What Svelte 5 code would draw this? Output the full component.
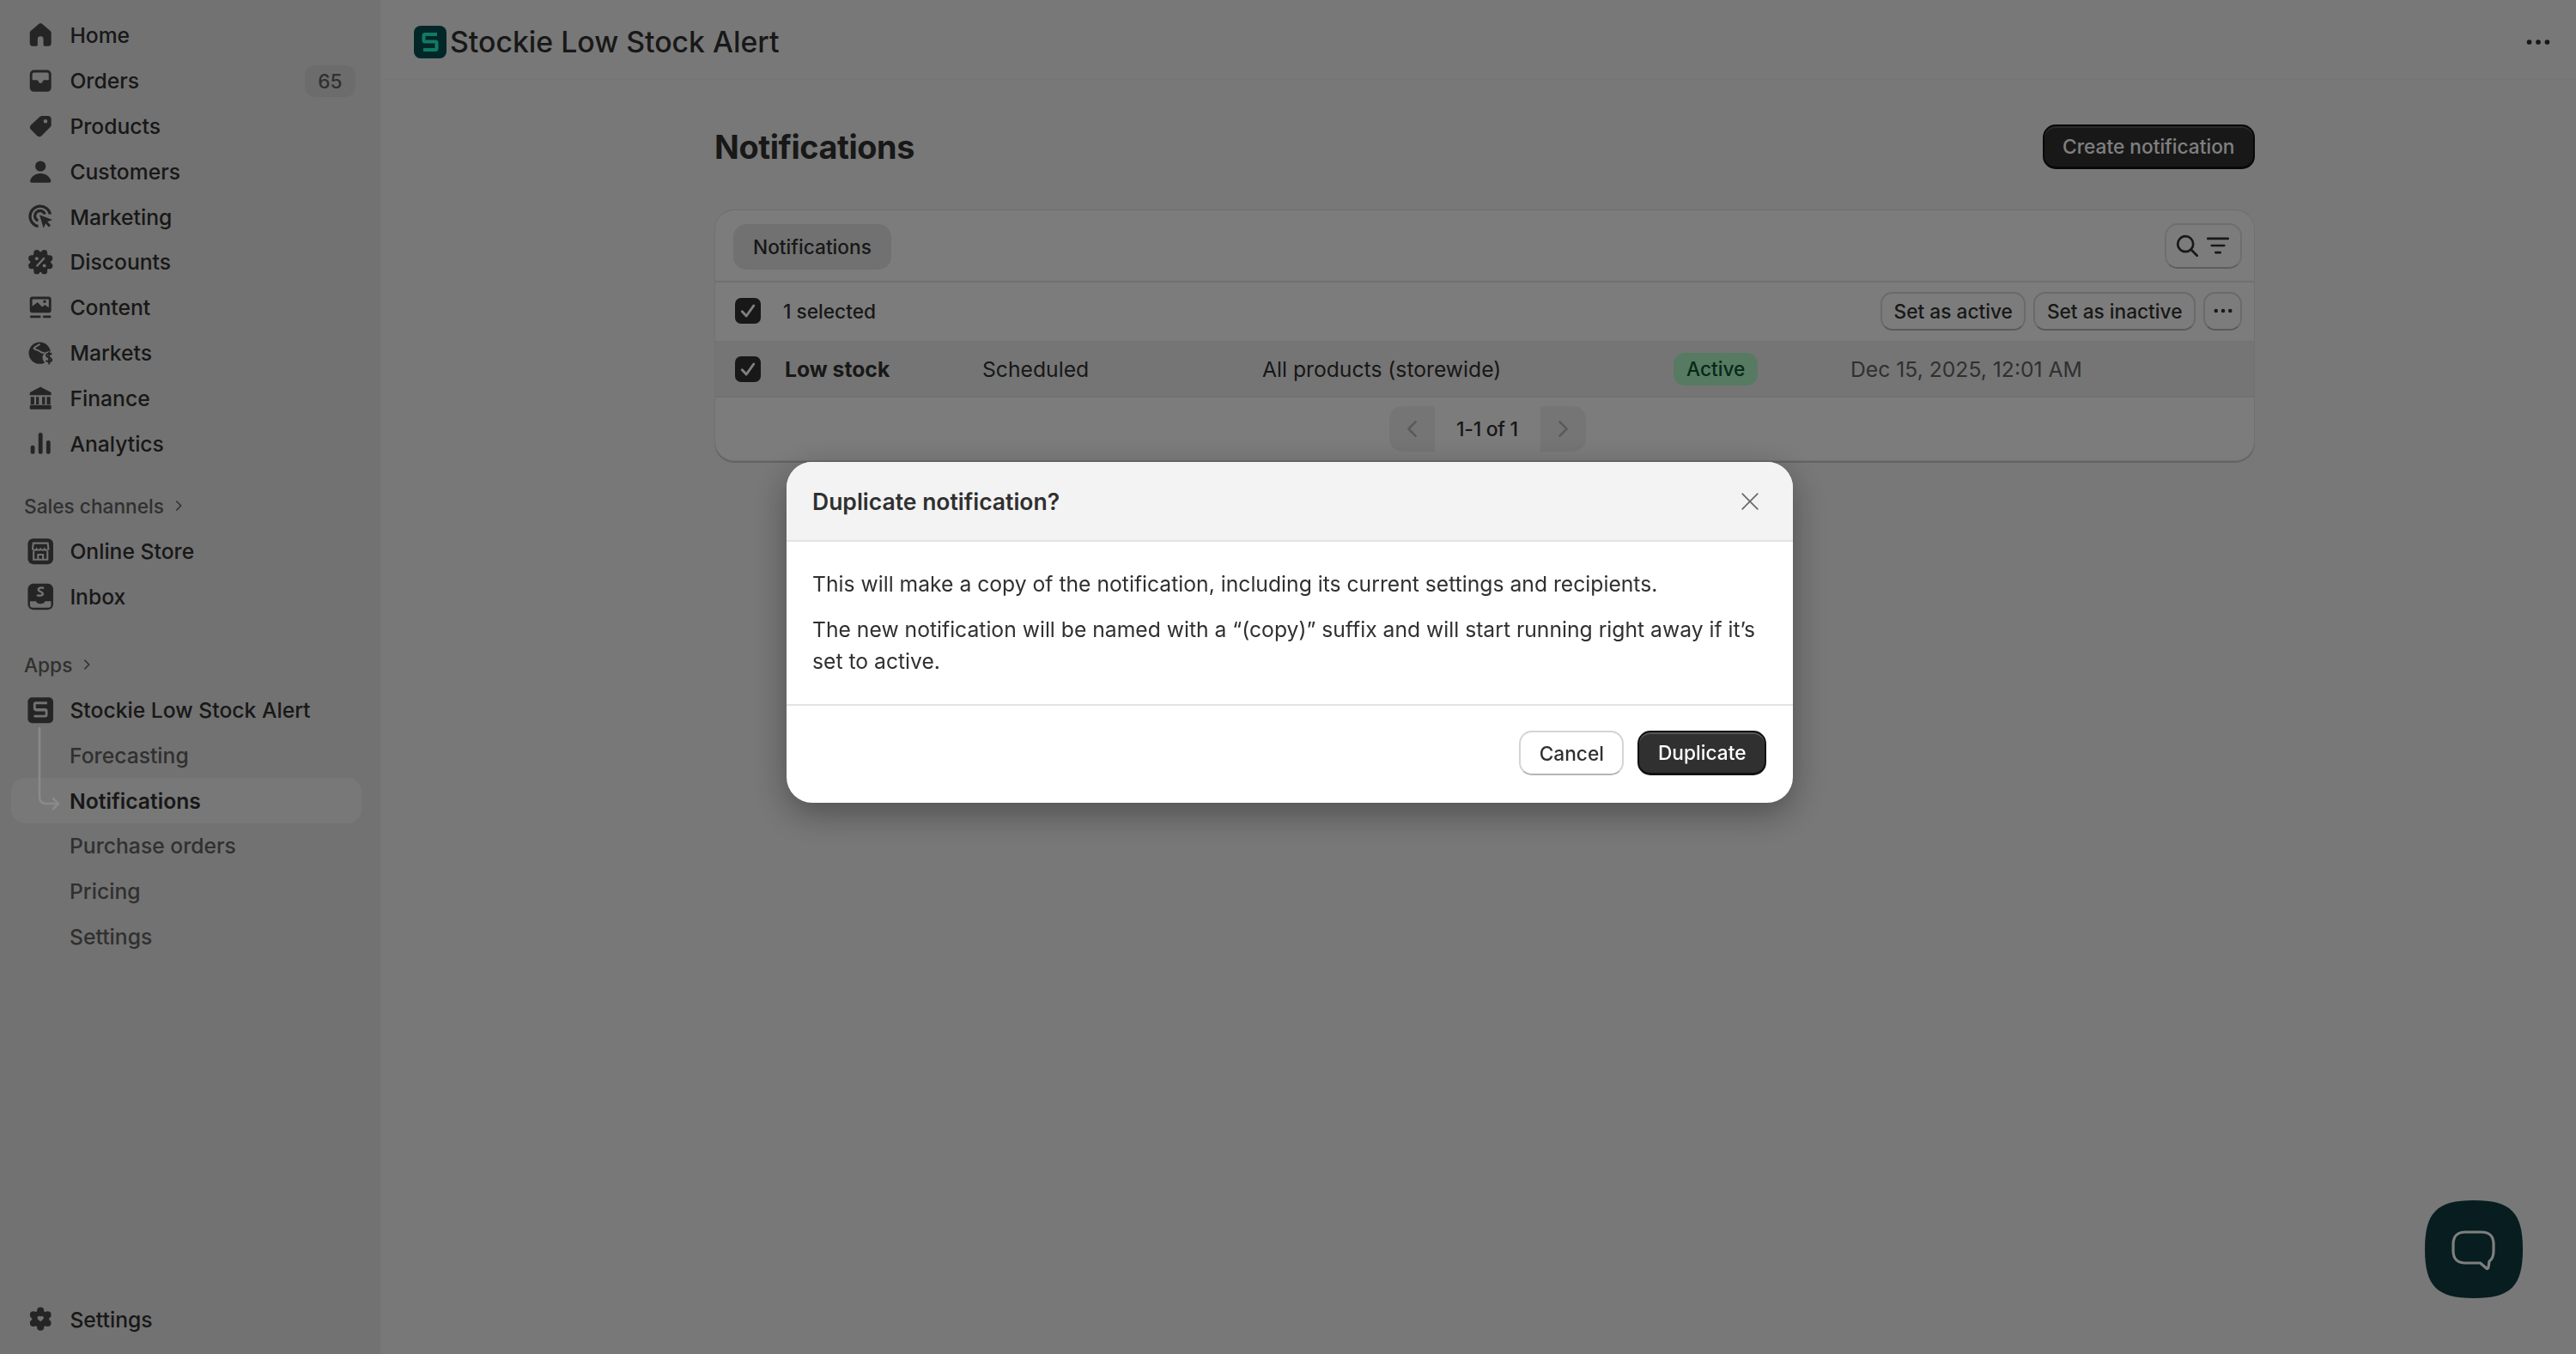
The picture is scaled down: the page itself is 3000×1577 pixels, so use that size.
<script>
  const bg = '#e4e4e4';

  const bumps = (r, n, br, start = 0) =>
    Array.from({ length: n }, (_, i) => {
      const a = start + (i * 2 * Math.PI) / n;
      return `<circle cx="${(10 + r * Math.cos(a)).toFixed(2)}" cy="${(10 + r * Math.sin(a)).toFixed(2)}" r="${br}"/>`;
    }).join('');

  const icons = {
    home: `<path d="M9.2 2.9a1.25 1.25 0 0 1 1.6 0l5 4.2c.45.38.7.93.7 1.52v6.13a1.75 1.75 0 0 1-1.75 1.75h-2.25a.75.75 0 0 1-.75-.75v-3.5a1.75 1.75 0 0 0-3.5 0v3.5a.75.75 0 0 1-.75.75h-2.25a1.75 1.75 0 0 1-1.75-1.75v-6.13c0-.59.25-1.14.7-1.52z"/>`,
    orders: `<path fill-rule="evenodd" d="M6 3.4h8a2.5 2.5 0 0 1 2.5 2.5v8.2a2.5 2.5 0 0 1-2.5 2.5h-8a2.5 2.5 0 0 1-2.5-2.5v-8.2a2.5 2.5 0 0 1 2.5-2.5zM6 5a1 1 0 0 0-1 1v3.5h2.6c.5 0 .9.3 1.1.8l.2.5c.1.3.4.5.7.5h.8c.3 0 .6-.2.7-.5l.2-.5c.2-.5.6-.8 1.1-.8H15V6a1 1 0 0 0-1-1z"/>`,
    products: `<path fill-rule="evenodd" d="M11 3.6h3.6c1 0 1.9.9 1.9 1.9v3.6c0 .5-.2 1-.6 1.3l-5.3 5.3c-.7.7-1.9.7-2.6 0l-3.9-3.9c-.7-.7-.7-1.9 0-2.6l5.6-5.1c.3-.3.8-.5 1.3-.5zM13 5.7a1.2 1.2 0 1 0 0 2.4 1.2 1.2 0 0 0 0-2.4z"/>`,
    customers: `<circle cx="10" cy="6.6" r="3.2"/><path d="M10 10.9c-3.4 0-5.6 2-6.3 4.4-.2.7.3 1.2 1 1.2h10.6c.7 0 1.2-.5 1-1.2-.7-2.4-2.9-4.4-6.3-4.4z"/>`,
    marketing: `<g fill="none" stroke="currentColor"><path stroke-width="1.7" d="M15.9 8.6A6.2 6.2 0 1 0 8.6 16"/><path stroke-width="1.7" d="M12.6 8.6a3.1 3.1 0 1 0-4.1 3.9"/></g><path d="M9.4 9l7.8 3-3 1.1 2 2.3-1.2 1-1.9-2.2-1.3 2.8z"/>`,
    discounts:
      `<circle cx="10" cy="10" r="6.2"/>` +
      bumps(5.9, 8, 1.9, Math.PI / 8) +
      `<path d="M7.6 12.6l4.8-5.2" stroke="${bg}" stroke-width="1.2"/><circle cx="7.7" cy="7.9" r="1" fill="${bg}"/><circle cx="12.3" cy="12.2" r="1" fill="${bg}"/>`,
    content: `<rect x="3.5" y="3.4" width="13" height="9.8" rx="1.6"/><path d="M5 5h10v5l-2.4-1.6-1.6 1.2-2.8-2.8L5 9.2z" fill="${bg}"/><circle cx="12.5" cy="6.4" r=".9"/><rect x="3.6" y="14.9" width="6.6" height="1.4" rx=".7"/><rect x="11.4" y="14.9" width="5" height="1.4" rx=".7"/>`,
    markets: `<circle cx="9.5" cy="10" r="6.6"/><path d="M9.6 4.6c-1.2 1-2.8 1.3-3.6 2.6.9 1 2.4.8 3.4 1.6 1 .8 2 1.3 3 .9" fill="none" stroke="${bg}" stroke-width="1"/><circle cx="15" cy="12.8" r="3.8" fill="${bg}"/><path d="M16.8 10.8c-.5-.5-2.9-.9-3.2.5-.3 1.7 3.3 1.1 3.1 2.9-.2 1.3-2.8 1-3.4.3M15.2 9.4v7.4" fill="none" stroke="currentColor" stroke-width="1.1"/>`,
    finance: `<path d="M9.3 3.2c.4-.2 1-.2 1.4 0l5.4 2.9c.3.2.4.4.4.7v1.2H3.5V6.8c0-.3.1-.5.4-.7z"/><path d="M4 9h2.2v4.5H4zM7.3 9H9v4.5H7.3zM11 9h1.7v4.5H11zM13.8 9H16v4.5h-2.2z"/><rect x="3.5" y="14" width="13" height="2.6" rx=".6"/>`,
    analytics: `<rect x="4" y="11.3" width="2.5" height="5.3" rx="1.1"/><rect x="8.75" y="3.6" width="2.5" height="13" rx="1.1"/><rect x="13.5" y="8.4" width="2.5" height="8.2" rx="1.1"/>`,
    store: `<rect x="2.3" y="2.2" width="15.4" height="15.6" rx="3.2"/><g fill="none" stroke="${bg}" stroke-width="1.1"><path d="M5.2 8.6c1 .9 2 .9 2.4 0 .6.9 1.8.9 2.4 0 .6.9 1.8.9 2.4 0 .4.9 1.4.9 2.4 0L14.4 5H5.6z"/><path d="M5.8 9.8V15h8.4V9.8M8.5 15v-3h3v3"/></g>`,
    inbox: `<rect x="2.3" y="2" width="15.4" height="15.8" rx="3.2"/><path d="M3.6 12.6h3.6c.4 1 1.4 1.6 2.8 1.6s2.4-.6 2.8-1.6h3.6V15c0 1-.6 1.6-1.6 1.6H5.2c-1 0-1.6-.6-1.6-1.6z" fill="${bg}"/><path d="M12 4.7c-1.3-.6-3.4-.3-3.3 1 .1 1.2 2.7 1.1 2.7 2.4 0 1.2-2.2 1.4-3.6.8" fill="none" stroke="${bg}" stroke-width="1.3"/>`,
    stockie: `<rect x="2.3" y="2.2" width="15.4" height="15.6" rx="2.6"/><path d="M14 5.6H7.2a.8.8 0 0 0-.8.8v2.400c0 .4.4.8.8.8h5.600c.4 0 .8.4.8.8v2.400c0 .4-.4.8-.8.8H6M7 9.900h6" fill="none" stroke="${bg}" stroke-width="1.5"/>`,
    gear: `<circle cx="10" cy="10" r="5.2"/>` + bumps(5, 6, 2.1, -Math.PI / 2) + `<path d="M10 8.5c.9-.7 2-.1 1.900.9-.1.9-1.100 1.500-1.900 2.100-.8-.6-1.800-1.200-1.900-2.100-.1-1 1-1.600 1.900-.9z" fill="${bg}"/>`
  };

  const mainNav = [
    { label: 'Home', icon: 'home' },
    { label: 'Orders', icon: 'orders', badge: 65 },
    { label: 'Products', icon: 'products' },
    { label: 'Customers', icon: 'customers' },
    { label: 'Marketing', icon: 'marketing' },
    { label: 'Discounts', icon: 'discounts' },
    { label: 'Content', icon: 'content' },
    { label: 'Markets', icon: 'markets' },
    { label: 'Finance', icon: 'finance' },
    { label: 'Analytics', icon: 'analytics' }
  ];
  const channels = [
    { label: 'Online Store', icon: 'store' },
    { label: 'Inbox', icon: 'inbox' }
  ];
  const appLinks = ['Forecasting', 'Notifications', 'Purchase orders', 'Pricing', 'Settings'];
</script>

{#snippet navRow(item)}
  <a class="nav-row" href="#top">
    <svg class="nav-icon" viewBox="0 0 20 20" fill="currentColor">{@html icons[item.icon]}</svg>
    <span class="nav-label">{item.label}</span>
    {#if item.badge}<span class="nav-badge">{item.badge}</span>{/if}
  </a>
{/snippet}

{#snippet chevron()}
  <svg class="chev" viewBox="0 0 20 20" fill="none" stroke="currentColor" stroke-width="1.8" stroke-linecap="round" stroke-linejoin="round"><path d="M7.5 4.500 13 10l-5.500 5.500"/></svg>
{/snippet}

{#snippet checkbox()}
  <span class="check">
    <svg viewBox="0 0 20 20" fill="none" stroke="#fff" stroke-width="2" stroke-linecap="round" stroke-linejoin="round"><path d="M5.500 10.500 8.800 14l5.700-8"/></svg>
  </span>
{/snippet}

{#snippet dots()}
  <svg class="dots" viewBox="0 0 20 20" fill="currentColor"><circle cx="4.500" cy="10" r="1.500"/><circle cx="10" cy="10" r="1.500"/><circle cx="15.500" cy="10" r="1.500"/></svg>
{/snippet}

<div class="admin">
  <aside class="sidebar">
    <nav class="nav-group first">
      {#each mainNav as item}{@render navRow(item)}{/each}
    </nav>

    <div class="section-title">Sales channels {@render chevron()}</div>
    <nav class="nav-group">
      {#each channels as item}{@render navRow(item)}{/each}
    </nav>

    <div class="section-title apps">Apps {@render chevron()}</div>
    <nav class="nav-group app-group">
      {@render navRow({ label: 'Stockie Low Stock Alert', icon: 'stockie' })}
      <svg class="connector" viewBox="0 0 26 100" fill="none" stroke="#8a8a8a" stroke-width="2.6" stroke-linecap="round" stroke-linejoin="round">
        <path d="M2 2v80c0 6 3 8 8 8h14M18 84l6 6-6 6"/>
      </svg>
      {#each appLinks as link}
        <a class="sub-row" class:active={link === 'Notifications'} href="#top">{link}</a>
      {/each}
    </nav>

    <div class="sidebar-foot">
      {@render navRow({ label: 'Settings', icon: 'gear' })}
    </div>
  </aside>

  <main class="main">
    <header class="topbar">
      <svg class="app-logo" viewBox="0 0 38 38">
        <rect width="38" height="38" rx="8" fill="#024e50" />
        <path d="M27 10H13a1.500 1.500 0 0 0-1.500 1.500v5.500c0 1 .7 1.500 1.500 1.500h12c1 0 1.500.7 1.500 1.500v6.500c0 1-.7 1.500-1.500 1.500H11" fill="none" stroke="#24f5c8" stroke-width="4" />
      </svg>
      <span class="app-title">Stockie Low Stock Alert</span>
      <span class="top-more">{@render dots()}</span>
    </header>

    <section class="page">
      <div class="page-head">
        <h1>Notifications</h1>
        <button class="btn primary">Create notification</button>
      </div>

      <div class="card">
        <div class="tabs-row">
          <span class="tab">Notifications</span>
          <button class="search-filter" aria-label="Search and filter">
            <svg viewBox="0 0 20 20" fill="none" stroke="currentColor" stroke-width="1.500" stroke-linecap="round"><circle cx="9" cy="9" r="5"/><path d="m12.800 12.800 3.700 3.700"/></svg>
            <svg viewBox="0 0 20 20" fill="none" stroke="currentColor" stroke-width="1.500" stroke-linecap="round"><path d="M3.500 5.500h13M6 10h8M8.500 14.500h3"/></svg>
          </button>
        </div>

        <div class="bulk-row">
          {@render checkbox()}
          <span class="selected">1 selected</span>
          <div class="bulk-actions">
            <button class="btn small">Set as active</button>
            <button class="btn small">Set as inactive</button>
            <button class="btn small more" aria-label="More actions">{@render dots()}</button>
          </div>
        </div>

        <div class="table-row">
          {@render checkbox()}
          <strong>Low stock</strong>
          <span>Scheduled</span>
          <span>All products (storewide)</span>
          <span><span class="status">Active</span></span>
          <span class="date">Dec 15, 2025, 12:01 AM</span>
        </div>

        <div class="pager">
          <button class="page-btn prev" aria-label="Previous">
            <svg viewBox="0 0 20 20" fill="none" stroke="currentColor" stroke-width="1.500" stroke-linecap="round" stroke-linejoin="round"><path d="M12.500 5 7.500 10l5 5"/></svg>
          </button>
          <span class="page-info">1-1 of 1</span>
          <button class="page-btn next" aria-label="Next">
            <svg viewBox="0 0 20 20" fill="none" stroke="currentColor" stroke-width="1.500" stroke-linecap="round" stroke-linejoin="round"><path d="M7.500 5l5 5-5 5"/></svg>
          </button>
        </div>
      </div>
    </section>
  </main>

  <button class="chat" aria-label="Open chat">
    <svg viewBox="0 0 114 114">
      <path d="M57 0C100 0 114 14 114 57S100 114 57 114 0 100 0 57 14 0 57 0z" fill="#0e3a40" />
      <path d="M47 37h19c9 0 14 5 14 14v8c0 6-2 10-5 12l-1 7c-.3 1.500-1.500 2-2.500 1l-7-6H47c-9 0-14-5-14-14V51c0-9 5-14 14-14z" fill="none" stroke="#fff" stroke-width="3.200" stroke-linejoin="round" />
    </svg>
  </button>
</div>

<div class="overlay">
  <div class="modal" role="dialog" aria-modal="true">
    <div class="modal-head">
      <h2>Duplicate notification?</h2>
      <button class="close" aria-label="Close">
        <svg viewBox="0 0 20 20" fill="none" stroke="currentColor" stroke-width="1.100" stroke-linecap="round"><path d="M4.500 4.500l11 11M15.500 4.500l-11 11"/></svg>
      </button>
    </div>
    <div class="modal-body">
      <p>This will make a copy of the notification, including its current settings and recipients.</p>
      <p>The new notification will be named with a “(copy)” suffix and will start running right away if it’s set to active.</p>
    </div>
    <div class="modal-foot">
      <button class="btn">Cancel</button>
      <button class="btn primary">Duplicate</button>
    </div>
  </div>
</div>

<style>
  :global(body) {
    margin: 0;
    font-family: Inter, "Noto Sans", sans-serif;
    color: #303030;
    background: #f1f1f1;
  }
  * {
    box-sizing: border-box;
  }
  a {
    color: inherit;
    text-decoration: none;
  }
  button {
    font-family: inherit;
    cursor: pointer;
  }

  .admin {
    display: flex;
    height: 1577px;
    overflow: hidden;
    position: relative;
  }

  /* sidebar */
  .sidebar {
    width: 443px;
    flex: none;
    background: #e4e4e4;
    display: flex;
    flex-direction: column;
    padding: 15px 22px 14px 13px;
  }
  .nav-group {
    display: flex;
    flex-direction: column;
  }
  .nav-row {
    display: flex;
    align-items: center;
    height: 52.8px;
    padding-left: 15px;
    font-size: 24.7px;
    font-weight: 500;
  }
  .nav-icon {
    width: 38.4px;
    height: 38.4px;
    flex: none;
    margin-right: 15px;
    color: #4a4a4a;
  }
  .nav-badge {
    margin-left: auto;
    margin-right: 7px;
    width: 59px;
    height: 37px;
    border-radius: 12px;
    background: rgba(0, 0, 0, 0.05);
    color: #616161;
    font-size: 22.7px;
    font-weight: 450;
    display: flex;
    align-items: center;
    justify-content: center;
  }
  .section-title {
    display: flex;
    align-items: center;
    gap: 8px;
    height: 53px;
    margin-top: 20px;
    padding-left: 15px;
    font-size: 22.7px;
    font-weight: 500;
    color: #616161;
  }
  .section-title.apps {
    margin-top: 26px;
  }
  .chev {
    width: 18px;
    height: 18px;
  }
  .app-group {
    position: relative;
  }
  .connector {
    position: absolute;
    z-index: 2;
    left: 31px;
    top: 45px;
    width: 26px;
    height: 100px;
    overflow: visible;
  }
  .sub-row {
    display: flex;
    align-items: center;
    height: 52.8px;
    padding-left: 68px;
    font-size: 24.7px;
    font-weight: 450;
    color: #616161;
    border-radius: 16px;
  }
  .sub-row.active {
    background: #f1f1f1;
    color: #303030;
    font-weight: 600;
  }
  .sidebar-foot {
    margin-top: auto;
  }

  /* main */
  .main {
    flex: 1;
    min-width: 0;
    background: #f1f1f1;
  }
  .topbar {
    display: flex;
    align-items: center;
    gap: 4px;
    height: 93px;
    padding: 5px 25px 0 39px;
    border-bottom: 1px solid #ebebeb;
  }
  .app-logo {
    width: 38px;
    height: 38px;
    flex: none;
  }
  .app-title {
    font-size: 33.8px;
    font-weight: 500;
  }
  .top-more {
    margin-left: auto;
    display: flex;
  }
  .top-more .dots {
    width: 38px;
    height: 38px;
  }
  .page {
    padding: 52px 0 0 389px;
    width: 2183px;
  }
  .page-head {
    display: flex;
    align-items: center;
    justify-content: space-between;
    height: 52px;
    margin-bottom: 47px;
  }
  h1 {
    margin: 0;
    font-size: 37.8px;
    font-weight: 650;
    letter-spacing: -0.4px;
  }
  .btn {
    height: 52px;
    padding: 0 21.5px;
    border-radius: 15px;
    border: 2px solid #d4d4d4;
    border-bottom-color: #b5b5b5;
    background: #fff;
    color: #303030;
    font-size: 22.7px;
    font-weight: 530;
    white-space: nowrap;
  }
  .btn.primary {
    background: #303030;
    color: #fff;
    border-color: #111;
    border-bottom-width: 3px;
    box-shadow: inset 0 2px 0 rgba(255, 255, 255, 0.18);
  }

  .card {
    height: 293px;
    background: #f9f9f9;
    border-radius: 23px;
    border: 1px solid #e3e3e3;
    border-top-color: #d8d8d8;
    box-shadow: 0 2px 0 #c8c8c8;
    overflow: hidden;
  }
  .tabs-row {
    display: flex;
    align-items: center;
    justify-content: space-between;
    height: 84px;
    padding: 2px 14px 0 21px;
    border-bottom: 2px solid #e0e0e0;
  }
  .tab {
    height: 53px;
    padding: 0 23px;
    display: flex;
    align-items: center;
    border-radius: 15px;
    background: #e3e3e3;
    font-size: 22.7px;
    font-weight: 500;
  }
  .search-filter {
    width: 90px;
    height: 53px;
    margin-top: -2px;
    padding: 0 5px 0 6px;
    display: flex;
    align-items: center;
    border-radius: 15px;
    border: 2px solid #dcdcdc;
    border-bottom-color: #bbb;
    background: #f9f9f9;
    color: #303030;
  }
  .search-filter svg {
    width: 36px;
    height: 36px;
  }
  .bulk-row {
    display: flex;
    align-items: center;
    height: 69px;
    padding: 0 14px 2px 23px;
    border-bottom: 1px solid #e8e8e8;
  }
  .check {
    width: 30px;
    height: 30px;
    flex: none;
    border-radius: 7px;
    background: #303030;
    display: flex;
  }
  .selected {
    margin-left: 26px;
    font-size: 22.7px;
    font-weight: 550;
  }
  .bulk-actions {
    margin-left: auto;
    display: flex;
    gap: 9px;
  }
  .btn.small {
    height: 45px;
    padding: 0 13.5px;
    border-radius: 14px;
    background: #f9f9f9;
  }
  .btn.more {
    width: 45px;
    padding: 0;
    display: flex;
    align-items: center;
    justify-content: center;
  }
  .btn.more .dots {
    width: 30px;
    height: 30px;
  }
  .table-row {
    display: grid;
    grid-template-columns: 58px 230px 326px 479px 206px 1fr;
    align-items: center;
    height: 65px;
    padding-left: 23px;
    background: #ebebeb;
    border-bottom: 2px solid #e3e3e3;
    font-size: 24.7px;
  }
  .table-row strong {
    font-weight: 650;
  }
  .status {
    display: inline-flex;
    align-items: center;
    height: 38px;
    padding: 0 15px;
    border-radius: 13px;
    background: #aff5c4;
    color: #0c5132;
    font-size: 22.7px;
    font-weight: 450;
  }
  .date {
    color: #616161;
  }
  .pager {
    display: flex;
    justify-content: center;
    align-items: center;
    padding: 10px 0 0 6px;
  }
  .page-btn {
    width: 53px;
    height: 53px;
    padding: 10px;
    border: none;
    background: #ebebeb;
    color: #b5b5b5;
    display: flex;
  }
  .page-btn.prev {
    border-radius: 15px 0 0 15px;
  }
  .page-btn.next {
    border-radius: 0 15px 15px 0;
  }
  .page-info {
    width: 123px;
    text-align: center;
    font-size: 23px;
    font-weight: 500;
    letter-spacing: -0.3px;
  }

  .chat {
    position: absolute;
    left: 2824px;
    top: 1398px;
    width: 114px;
    height: 114px;
    padding: 0;
    border: none;
    background: none;
  }

  /* dialog */
  .overlay {
    position: fixed;
    inset: 0;
    background: rgba(0, 0, 0, 0.5);
    display: flex;
    justify-content: center;
    align-items: flex-start;
    padding: 538px 0 0 4px;
  }
  .modal {
    width: 1172px;
    height: 397px;
    background: #fff;
    border-radius: 30px;
    overflow: hidden;
    box-shadow: 0 12px 40px rgba(0, 0, 0, 0.35);
    display: flex;
    flex-direction: column;
  }
  .modal-head {
    display: flex;
    align-items: center;
    justify-content: space-between;
    height: 93px;
    padding: 0 34px 0 30px;
    background: #f3f3f3;
    border-bottom: 2px solid #e3e3e3;
  }
  h2 {
    margin: 0;
    font-size: 26.5px;
    font-weight: 600;
  }
  .close {
    width: 32px;
    height: 32px;
    padding: 0;
    border: none;
    background: none;
    color: #6a6a6a;
    display: flex;
  }
  .modal-body {
    height: 191px;
    padding: 31px 30px 0;
    border-bottom: 2px solid #e3e3e3;
    font-size: 24.7px;
    line-height: 37px;
  }
  .modal-body p {
    margin: 0 0 16px;
  }
  .modal-foot {
    flex: 1;
    display: flex;
    justify-content: flex-end;
    align-items: center;
    gap: 16px;
    padding: 0 31px 3px 0;
  }
</style>
